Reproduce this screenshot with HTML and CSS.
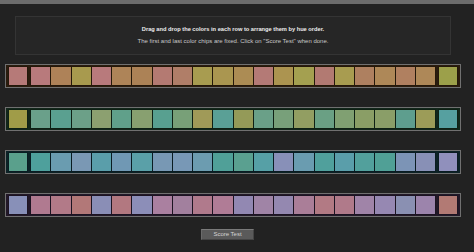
FILE: index.html
```html
<!DOCTYPE html>
<html lang="en">

<head>
    <meta charset="UTF-8">
    <meta name="viewport" content="width=device-width, initial-scale=1.0">
    <title>Hue Test</title>
    <link rel="stylesheet" href="styles.css">
</head>

<body>
    <div class="topbar"></div>
    <div class="page">
        <div class="intro">
            <p class="lead">Drag and drop the colors in each row to arrange them by hue order.</p>
            <p>The first and last color chips are fixed. Click on "Score Test" when done.</p>
        </div>

        <div class="row row1">
            <div class="chip fixed" style="background:#b67a78"></div>
            <div class="moves">
                <div class="chip" style="background:#b87a7c"></div>
                <div class="chip" style="background:#ae8258"></div>
                <div class="chip" style="background:#a89a4e"></div>
                <div class="chip" style="background:#b87a7c"></div>
                <div class="chip" style="background:#ae8458"></div>
                <div class="chip" style="background:#ac8256"></div>
                <div class="chip" style="background:#b47a72"></div>
                <div class="chip" style="background:#b07e68"></div>
                <div class="chip" style="background:#a89c50"></div>
                <div class="chip" style="background:#aa9650"></div>
                <div class="chip" style="background:#ac8c54"></div>
                <div class="chip" style="background:#b47a76"></div>
                <div class="chip" style="background:#ac9450"></div>
                <div class="chip" style="background:#a4a050"></div>
                <div class="chip" style="background:#b27a72"></div>
                <div class="chip" style="background:#a89c50"></div>
                <div class="chip" style="background:#ae8060"></div>
                <div class="chip" style="background:#ae8858"></div>
                <div class="chip" style="background:#b08060"></div>
                <div class="chip" style="background:#ae8858"></div>
            </div>
            <div class="chip fixed" style="background:#9ca04a"></div>
        </div>

        <div class="row row2">
            <div class="chip fixed" style="background:#a09c48"></div>
            <div class="moves">
                <div class="chip" style="background:#6aa08a"></div>
                <div class="chip" style="background:#5aa090"></div>
                <div class="chip" style="background:#6ca088"></div>
                <div class="chip" style="background:#8ca070"></div>
                <div class="chip" style="background:#60a08a"></div>
                <div class="chip" style="background:#88a070"></div>
                <div class="chip" style="background:#58a090"></div>
                <div class="chip" style="background:#78a078"></div>
                <div class="chip" style="background:#a09a58"></div>
                <div class="chip" style="background:#5aa096"></div>
                <div class="chip" style="background:#949a58"></div>
                <div class="chip" style="background:#6aa088"></div>
                <div class="chip" style="background:#78a07a"></div>
                <div class="chip" style="background:#929e62"></div>
                <div class="chip" style="background:#6aa084"></div>
                <div class="chip" style="background:#80a072"></div>
                <div class="chip" style="background:#8a9e66"></div>
                <div class="chip" style="background:#8a9e68"></div>
                <div class="chip" style="background:#5e9e8e"></div>
                <div class="chip" style="background:#9c9c58"></div>
            </div>
            <div class="chip fixed" style="background:#56a0a0"></div>
        </div>

        <div class="row row3">
            <div class="chip fixed" style="background:#5aa08c"></div>
            <div class="moves">
                <div class="chip" style="background:#4ea09c"></div>
                <div class="chip" style="background:#6a9cb0"></div>
                <div class="chip" style="background:#7a98b4"></div>
                <div class="chip" style="background:#5a9eaa"></div>
                <div class="chip" style="background:#7098b4"></div>
                <div class="chip" style="background:#5aa0a8"></div>
                <div class="chip" style="background:#7898b4"></div>
                <div class="chip" style="background:#7898b6"></div>
                <div class="chip" style="background:#6c9cb0"></div>
                <div class="chip" style="background:#50a098"></div>
                <div class="chip" style="background:#5aa090"></div>
                <div class="chip" style="background:#56a0a6"></div>
                <div class="chip" style="background:#8890b8"></div>
                <div class="chip" style="background:#6a9cb0"></div>
                <div class="chip" style="background:#50a09c"></div>
                <div class="chip" style="background:#5a9eaa"></div>
                <div class="chip" style="background:#52a09c"></div>
                <div class="chip" style="background:#50a096"></div>
                <div class="chip" style="background:#7c94b6"></div>
                <div class="chip" style="background:#8890b6"></div>
            </div>
            <div class="chip fixed" style="background:#9090bc"></div>
        </div>

        <div class="row row4">
            <div class="chip fixed" style="background:#8890b8"></div>
            <div class="moves">
                <div class="chip" style="background:#b07a90"></div>
                <div class="chip" style="background:#b27a88"></div>
                <div class="chip" style="background:#b27878"></div>
                <div class="chip" style="background:#8a8eb6"></div>
                <div class="chip" style="background:#b27880"></div>
                <div class="chip" style="background:#8c8eb8"></div>
                <div class="chip" style="background:#aa80a0"></div>
                <div class="chip" style="background:#a2809e"></div>
                <div class="chip" style="background:#b07a8c"></div>
                <div class="chip" style="background:#b07c96"></div>
                <div class="chip" style="background:#9288b2"></div>
                <div class="chip" style="background:#a084a6"></div>
                <div class="chip" style="background:#9488b0"></div>
                <div class="chip" style="background:#aa7e98"></div>
                <div class="chip" style="background:#b27a84"></div>
                <div class="chip" style="background:#b07a8a"></div>
                <div class="chip" style="background:#a084a8"></div>
                <div class="chip" style="background:#9688b2"></div>
                <div class="chip" style="background:#8a90b2"></div>
                <div class="chip" style="background:#9c84ac"></div>
            </div>
            <div class="chip fixed" style="background:#b27a74"></div>
        </div>

        <div class="actions">
            <button class="score">Score Test</button>
        </div>
    </div>
</body>

</html>
```

FILE: styles.css
```css
* {
    padding: 0;
    margin: 0;
    box-sizing: border-box;
}

body {
    background: #222;
    font-family: "Liberation Sans", Arial, sans-serif;
    color: #ddd;
}

.topbar {
    height: 4px;
    background: #6c6c6c;
}

.page {
    padding: 0 13px 0 5px;
}

/* instructions */
.intro {
    height: 39px;
    margin: 12px 10px 9px;
    padding-top: 6px;
    background: #262626;
    border: 1px solid #343434;
    text-align: center;
    font-size: 6px;
    line-height: 12px;
    color: #c8c8c8;
}

.intro .lead {
    font-size: 5.7px;
    font-weight: bold;
    color: #eee;
}

/* chip rows */
.row {
    display: flex;
    height: 24px;
    padding: 1px 2px;
    margin-bottom: 19px;
    border: 1px solid #707070;
}

.moves {
    flex: 1;
    display: flex;
    gap: 1px;
    padding: 1px;
    margin: 0 2px;
}

.chip {
    height: 20px;
}

.fixed {
    width: 20px;
    border: 1px solid #1c140c;
}

.moves .chip {
    flex: 1;
    height: 18px;
}

.row1 { background: #2a1c0e; }
.row1 .moves { background: #24180a; }
.row1 .fixed { border-color: #24180a; }
.row2 { background: #12261a; }
.row2 .moves { background: #0e2014; }
.row2 .fixed { border-color: #0e2014; }
.row3 { background: #0c2226; }
.row3 .moves { background: #0a1c22; }
.row3 .fixed { border-color: #0a1c22; }
.row4 { background: #221828; }
.row4 .moves { background: #1c1422; }
.row4 .fixed { border-color: #1c1422; }

.row4 {
    margin-bottom: 0;
}

/* button */
.actions {
    display: flex;
    justify-content: center;
    padding: 12px 11px 0 0;
}

.score {
    width: 53px;
    height: 11px;
    background: #5a5a5a;
    border: 1px solid #444;
    border-top-color: #7a7a7a;
    border-left-color: #6a6a6a;
    color: #d4d4d4;
    font-family: "Liberation Sans", Arial, sans-serif;
    font-size: 6px;
    line-height: 9px;
}
```
